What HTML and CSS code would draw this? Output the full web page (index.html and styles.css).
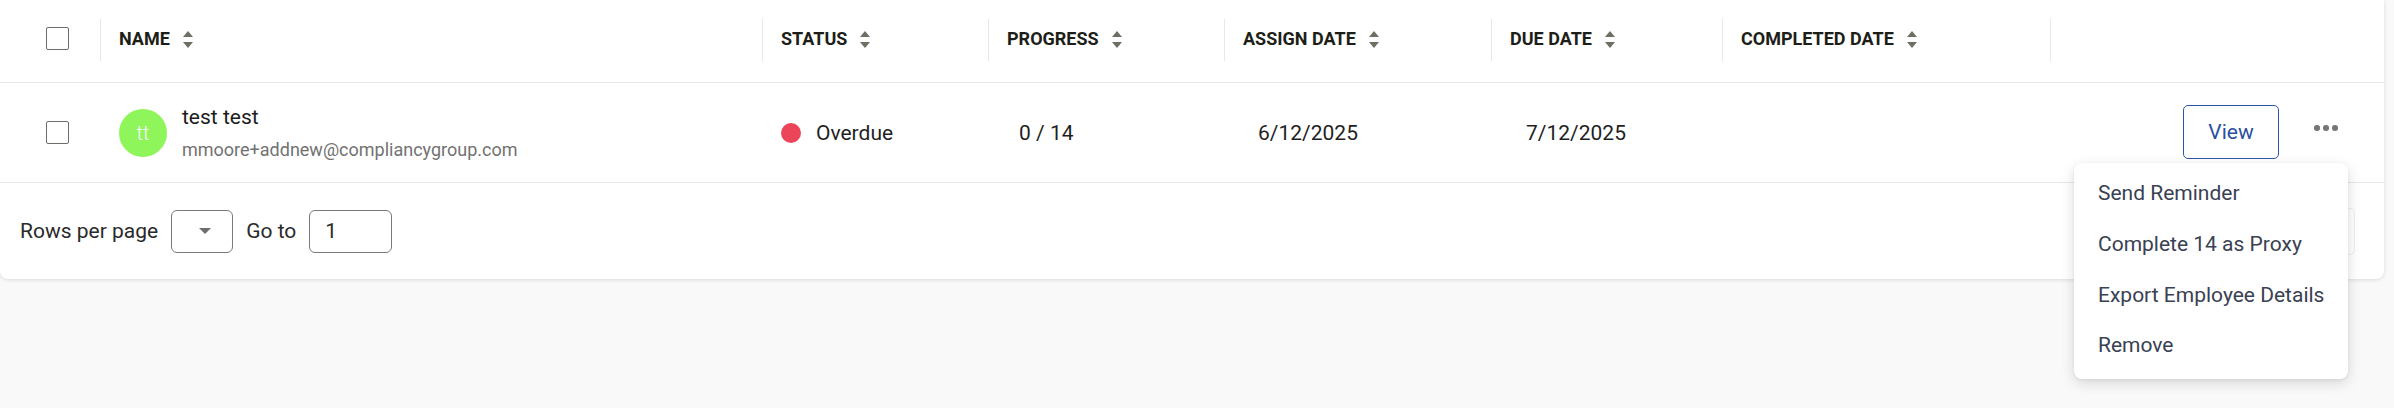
FILE: index.html
```html
<!DOCTYPE html>
<html lang="en">
<head>
<meta charset="utf-8">
<title>Employees</title>
<link rel="stylesheet" href="styles.css">
</head>
<body>
<div class="card">
  <div class="row head">
    <div class="cell c-check"><span class="checkbox"></span></div>
    <div class="cell hcell">NAME <span class="sort"><i class="up"></i><i class="down"></i></span></div>
    <div class="cell hcell">STATUS <span class="sort"><i class="up"></i><i class="down"></i></span></div>
    <div class="cell hcell">PROGRESS <span class="sort"><i class="up"></i><i class="down"></i></span></div>
    <div class="cell hcell">ASSIGN DATE <span class="sort"><i class="up"></i><i class="down"></i></span></div>
    <div class="cell hcell">DUE DATE <span class="sort"><i class="up"></i><i class="down"></i></span></div>
    <div class="cell hcell">COMPLETED DATE <span class="sort"><i class="up"></i><i class="down"></i></span></div>
    <div class="cell hcell"></div>
  </div>
  <div class="row body">
    <div class="cell c-check"><span class="checkbox"></span></div>
    <div class="cell c-name">
      <span class="avatar">tt</span>
      <div class="who">
        <div class="uname">test test</div>
        <div class="email">mmoore+addnew@compliancygroup.com</div>
      </div>
    </div>
    <div class="cell c-status"><span class="dot"></span>Overdue</div>
    <div class="cell c-progress">0 / 14</div>
    <div class="cell c-assign">6/12/2025</div>
    <div class="cell c-due">7/12/2025</div>
    <div class="cell"></div>
    <div class="cell c-actions">
      <button class="view">View</button>
      <button class="more"><i></i><i></i><i></i></button>
    </div>
  </div>
  <div class="footer">
    <span class="label">Rows per page</span>
    <span class="select"><i class="caret"></i></span>
    <span class="label">Go to</span>
    <span class="input">1</span>
    <span class="spacer"></span>
    <span class="pagebox"></span>
  </div>
  <ul class="menu">
    <li>Send Reminder</li>
    <li>Complete 14 as Proxy</li>
    <li>Export Employee Details</li>
    <li>Remove</li>
  </ul>
</div>
</body>
</html>
```
FILE: styles.css
```css
* { box-sizing: border-box; }
html, body { margin: 0; padding: 0; }
body {
  background: #f9f9f9;
  font-family: Roboto, "Liberation Sans", sans-serif;
  color: #1f1f1f;
  width: 2394px;
  height: 408px;
  overflow: hidden;
}
.card {
  position: relative;
  width: 2384px;
  background: #fff;
  border-radius: 0 0 8px 8px;
  box-shadow: 0 1px 4px rgba(0,0,0,0.12);
}
.row {
  display: grid;
  grid-template-columns: 100px 662px 226px 236px 267px 231px 328px 1fr;
  border-bottom: 1px solid #e6e6e6;
}
.head {
  height: 83px;
  padding-top: 19px;
  align-items: start;
}
.cell {
  display: flex;
  align-items: center;
}
.head .cell { height: 42px; }
.hcell {
  border-left: 1px solid #e8e8e8;
  padding-left: 18px;
  padding-bottom: 4px;
  font-size: 18px;
  font-weight: 700;
  color: #1e1e18;
}
.c-check { padding-left: 46px; }
.head .c-check { padding-bottom: 4px; }
.checkbox {
  display: block;
  width: 23px;
  height: 23px;
  border: 1.5px solid #6e6e68;
  border-radius: 2px;
}
.sort {
  display: inline-flex;
  flex-direction: column;
  gap: 5px;
  margin-left: 13px;
  margin-top: 2px;
}
.sort i {
  display: block;
  width: 0;
  height: 0;
  border-left: 5px solid transparent;
  border-right: 5px solid transparent;
}
.sort .up { border-bottom: 6px solid #6e6e62; }
.sort .down { border-top: 6px solid #6e6e62; }

.body { height: 100px; }
.body .cell { font-size: 21px; color: #1f1f1f; }
.c-name { padding-left: 19px; }
.avatar {
  width: 48px;
  height: 48px;
  border-radius: 50%;
  background: #8ef65a;
  color: #fff;
  font-size: 20px;
  font-weight: 300;
  display: flex;
  align-items: center;
  justify-content: center;
  margin-right: 15px;
  flex: none;
}
.uname { font-size: 21px; line-height: 28px; color: #1c1c1c; }
.email { font-size: 18px; line-height: 26px; margin-top: 6px; color: #727272; }
.c-status { padding-left: 19px; }
.dot {
  width: 20px;
  height: 20px;
  border-radius: 50%;
  background: #ec4459;
  margin-right: 15px;
}
.c-progress { padding-left: 31px; }
.c-assign { padding-left: 34px; }
.c-due { padding-left: 35px; }
.c-actions {
  justify-content: flex-end;
  padding-right: 38px;
  padding-top: 1px;
}
.view {
  width: 96px;
  height: 54px;
  border: 1px solid #2c55a8;
  border-radius: 5px;
  background: #fff;
  color: #2a4f9f;
  font-family: Roboto, "Liberation Sans", sans-serif;
  font-size: 21px;
  padding: 0;
  margin-top: -2px;
  margin-right: 27px;
}
.more {
  width: 40px;
  height: 20px;
  border: 0;
  background: transparent;
  padding: 0;
  display: flex;
  align-items: center;
  justify-content: center;
  gap: 3.5px;
  margin-top: -10px;
}
.more i {
  display: block;
  width: 5.5px;
  height: 5.5px;
  border-radius: 50%;
  background: #767676;
}

.footer {
  display: flex;
  align-items: center;
  height: 96px;
  padding-left: 20px;
  padding-right: 29px;
  font-size: 21px;
  color: #2a2a2a;
}
.select {
  width: 62px;
  height: 43px;
  border: 1px solid #7a7a7a;
  border-radius: 6px;
  margin: 0 13px;
  display: flex;
  align-items: center;
  justify-content: center;
}
.caret {
  width: 0;
  height: 0;
  border-left: 6px solid transparent;
  border-right: 6px solid transparent;
  border-top: 6px solid #6e6e6e;
  margin-left: 5px;
}
.input {
  width: 83px;
  height: 43px;
  border: 1px solid #7a7a7a;
  border-radius: 6px;
  margin-left: 13px;
  padding-left: 15px;
  display: flex;
  align-items: center;
}
.spacer { flex: 1; }
.pagebox {
  width: 64px;
  height: 47px;
  border: 1px solid #eeeeee;
  border-radius: 5px;
  margin-top: 1px;
}
.menu {
  position: absolute;
  left: 2074px;
  top: 163px;
  width: 274px;
  margin: 0;
  padding: 5px 0 8px;
  list-style: none;
  background: #fff;
  border-radius: 8px;
  box-shadow: 0 4px 14px rgba(0,0,0,0.14), 0 1px 3px rgba(0,0,0,0.06);
  z-index: 5;
}
.menu li {
  height: 50.7px;
  display: flex;
  align-items: center;
  padding-left: 24px;
  font-size: 21px;
  color: #394152;
}
```
